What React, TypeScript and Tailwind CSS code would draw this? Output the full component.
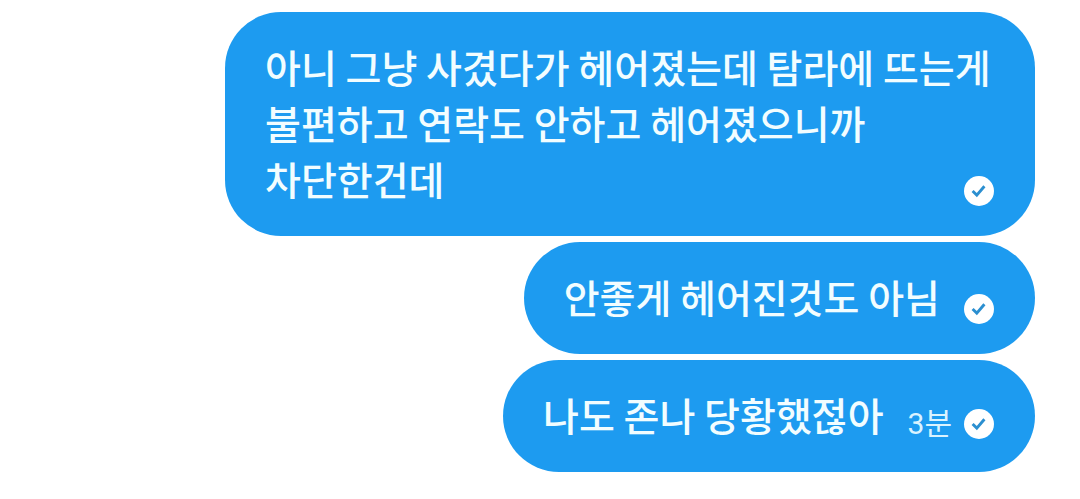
import clsx from "clsx";

type Message = {
  id: number;
  text: string;
  time?: string;
};

const messages: Message[] = [
  {
    id: 1,
    text: "아니 그냥 사겼다가 헤어졌는데 탐라에 뜨는게 불편하고 연락도 안하고 헤어졌으니까 차단한건데",
  },
  { id: 2, text: "안좋게 헤어진것도 아님" },
  { id: 3, text: "나도 존나 당황했젆아", time: "3분" },
];

function SentIcon() {
  return (
    <svg viewBox="0 0 30 30" className="h-[30px] w-[30px] shrink-0" aria-hidden="true">
      <circle cx="15" cy="15" r="15" fill="#fff" />
      <path d="M8.6 15l4.2 4.1 7.6-8.8" fill="none" stroke="#2b8fd0" strokeWidth="2.9" />
    </svg>
  );
}

function MessageBubble({ message }: { message: Message }) {
  // The status mark tucks under the text once the message wraps.
  const wraps = message.text.length > 20;

  return (
    <li className="mr-[45px] flex max-w-3/4 items-end rounded-[56px] bg-[#1d9bf0] pt-[26px] pr-[41px] pb-[30px] pl-10 text-white">
      <p className="text-[39px] leading-[56px] font-medium break-keep text-[#f2fdff]">
        {message.text}
      </p>
      <div className={clsx("flex shrink-0 items-center gap-3", wraps ? "-ml-[30px]" : "ml-6")}>
        {message.time && (
          <time
            className="text-[30px] leading-[36px] whitespace-nowrap text-[#daf3ff]"
            style={{ fontFamily: 'Roboto, "Noto Sans CJK KR", sans-serif' }}
          >
            {message.time}
          </time>
        )}
        <SentIcon />
      </div>
    </li>
  );
}

export default function App() {
  return (
    <main
      className="min-h-screen bg-white"
      style={{ fontFamily: '"Noto Sans CJK KR", sans-serif' }}
    >
      <ul className="flex flex-col items-end gap-[6px] pt-3">
        {messages.map((message) => (
          <MessageBubble key={message.id} message={message} />
        ))}
      </ul>
    </main>
  );
}
